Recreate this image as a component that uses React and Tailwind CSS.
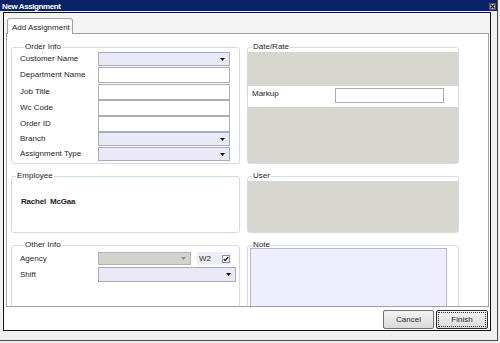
import React from "react";

const Arrow = ({ color = "#111" }) => (
  <svg width="5" height="3" viewBox="0 0 5 3">
    <path d="M0 0h5L2.5 3z" fill={color} />
  </svg>
);

const Combo = ({ w = "w-[132px]", h = "h-[14px]", disabled = false }) => (
  <div
    className={`${w} ${h} flex items-center justify-end pr-[4px] border ${
      disabled ? "border-[#b4b4b4] bg-[#d4d3cc]" : "border-[#a9a9c4] bg-[#e9e9f8]"
    }`}
  >
    <Arrow color={disabled ? "#8c8c8c" : "#111"} />
  </div>
);

const TextBox = () => <div className="w-[132px] h-[16px] border border-[#abadb3] bg-white" />;

const Row = ({ label, className = "", children }) => (
  <div className={`flex items-center ${className}`}>
    <span className="w-[78px] shrink-0">{label}</span>
    {children}
  </div>
);

const Group = ({ title, className = "", children }) => (
  <fieldset className={`border border-[#d3dce5] rounded-[3px] ${className}`}>
    <legend className="ml-[4px] px-[1px] leading-[10px]">{title}</legend>
    {children}
  </fieldset>
);

const App = () => {
  return (
    <div className="w-[500px] h-[343px] bg-[#ececec] font-['Liberation_Sans',Arial,sans-serif] text-[8px] leading-[10px] text-[#1e1e1e]">
      <div className="w-[498px] h-[341px] border-r border-b border-[#4a4a4a] bg-[#f0f0f0]">
        {/* title bar */}
        <div className="h-[11px] bg-[#0a2268] flex items-start justify-between">
          <span className="mt-[1px] pl-[2px] leading-[11px] font-bold text-white tracking-[-0.4px]">
            New Assignment
          </span>
          <div className="mt-[3px] mr-[1px] w-[7px] h-[7px] bg-[#d8d6d0] border border-[#555] flex items-center justify-center">
            <svg width="5" height="5" viewBox="0 0 5 5">
              <path d="M0.5 0.5L4.5 4.5M4.5 0.5L0.5 4.5" stroke="#000" strokeWidth="1.1" />
            </svg>
          </div>
        </div>

        {/* window body */}
        <div className="ml-[3px] mt-[1px] w-[488px] h-[319px] border border-[#111] bg-white flex flex-col">
          <div className="h-[20px] bg-[#f4f4f4] flex items-end">
            <div className="relative z-10 ml-[3px] -mb-px w-[66px] h-[16px] border-t border-l border-r border-[#a0a0a0] rounded-t-[3px] bg-white pl-[4px] pt-[4px] leading-[10px]">
              Add Assignment
            </div>
          </div>

          <div className="ml-[2px] w-[483px] h-[274px] border border-[#a0a0a0] bg-white overflow-hidden">
            <div className="flex gap-[7px] pl-[4px] pt-[8px]">
              {/* left column */}
              <div className="flex flex-col w-[229px]">
                <Group title="Order Info" className="w-[229px] pl-[8px] pb-[2px]">
                  <Row label="Customer Name">
                    <Combo />
                  </Row>
                  <Row label="Department Name" className="mt-[1px]">
                    <TextBox />
                  </Row>
                  <Row label="Job Title" className="mt-[1px]">
                    <TextBox />
                  </Row>
                  <Row label="Wc Code">
                    <TextBox />
                  </Row>
                  <Row label="Order ID">
                    <TextBox />
                  </Row>
                  <Row label="Branch">
                    <Combo />
                  </Row>
                  <Row label="Assignment Type" className="mt-[1px]">
                    <Combo />
                  </Row>
                </Group>

                <Group title="Employee" className="w-[229px] mt-[7px]">
                  <div className="h-[51px] pt-[16px] pl-[9px] font-bold whitespace-pre tracking-[-0.2px]">
                    Rachel  McGaa
                  </div>
                </Group>

                <Group title="Other Info" className="w-[229px] mt-[7px] h-[90px] pl-[8px]">
                  <Row label="Agency" className="mt-[2px]">
                    <Combo w="w-[93px]" h="h-[13px]" disabled />
                    <div className="ml-[6px] w-[34px] h-[13px] bg-[#eeeefb] flex items-center justify-between pl-[2px] pr-[1px]">
                      <span>W2</span>
                      <div className="w-[8px] h-[8px] border border-[#8e8f9f] bg-white flex items-center justify-center">
                        <svg width="6" height="6" viewBox="0 0 6 6">
                          <path d="M0.8 3L2.3 4.6L5.2 1" fill="none" stroke="#222" strokeWidth="1.3" />
                        </svg>
                      </div>
                    </div>
                  </Row>
                  <Row label="Shift" className="mt-[2px]">
                    <Combo w="w-[138px]" h="h-[15px]" />
                  </Row>
                </Group>
              </div>

              {/* right column */}
              <div className="flex flex-col w-[212px]">
                <Group title="Date/Rate" className="w-[212px] pb-[0px]">
                  <div className="h-[34px] bg-[#d6d5ce]" />
                  <div className="h-[21px] bg-white flex items-start">
                    <span className="w-[87px] pl-[4px] pt-[3px]">Markup</span>
                    <div className="mt-[2px] w-[109px] h-[15px] border border-[#a9a9bb] bg-white" />
                  </div>
                  <div className="h-[56px] bg-[#d6d5ce]" />
                </Group>

                <Group title="User" className="w-[212px] mt-[7px]">
                  <div className="h-[51px] bg-[#d6d5ce]" />
                </Group>

                <Group title="Note" className="w-[212px] mt-[7px] h-[90px]">
                  <div className="-mt-[2px] ml-[2px] w-[197px] h-[70px] border border-[#b7b7cf] bg-[#eeeefd]" />
                </Group>
              </div>
            </div>
          </div>

          {/* buttons */}
          <div className="mt-[3px] pr-[2px] flex justify-end gap-[2px]">
            <div className="w-[51px] h-[19px] border border-[#707070] rounded-[2px] bg-linear-to-b from-[#f4f4f4] to-[#dadada] flex items-center justify-center">
              Cancel
            </div>
            <div className="w-[52px] h-[19px] border border-[#2e2e2e] rounded-[2px] bg-linear-to-b from-[#f4f4f4] to-[#dadada] p-[1px]">
              <div className="h-full border border-dotted border-[#333] flex items-center justify-center">
                Finish
              </div>
            </div>
          </div>
        </div>
      </div>
    </div>
  );
};

export default App;
